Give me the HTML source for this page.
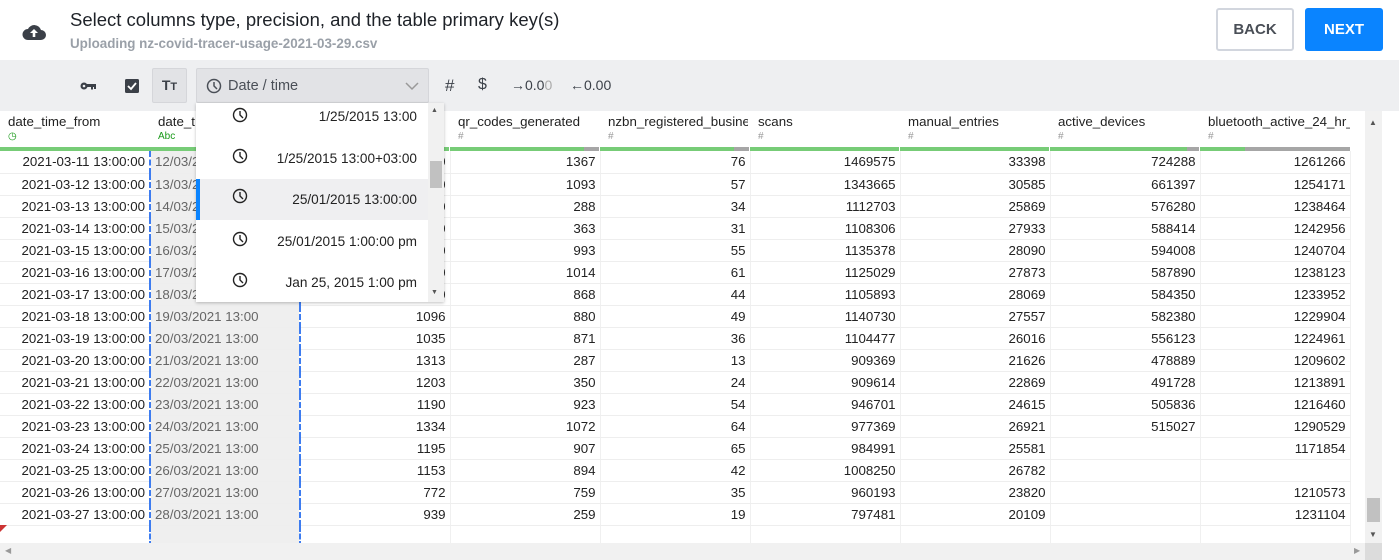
<!DOCTYPE html>
<html><head><meta charset="utf-8"><style>
*{box-sizing:border-box;margin:0;padding:0}
body{width:1399px;height:560px;overflow:hidden;background:#fff;font-family:"Liberation Sans",Arial,sans-serif;position:relative;color:#222}
.abs{position:absolute}
.title{left:70px;top:9px;font-size:18.5px;color:#1e2228}
.sub{left:70px;top:36px;font-size:13.4px;color:#9aa0a8;font-weight:bold}
.btn{top:8px;height:43px;width:78px;border-radius:3px;font-weight:bold;font-size:15px;display:flex;align-items:center;justify-content:center}
.toolbar{left:0;top:60px;width:1399px;height:51px;background:#eeeff1}
table{position:absolute;left:0;top:151px;border-collapse:collapse;table-layout:fixed;width:1350px}
td{width:150px;height:22px;border-right:1px solid #f0f0f0;border-bottom:1px solid #eee;text-align:right;padding-right:4px;font-size:13.3px;color:#222;white-space:nowrap;overflow:hidden}
td.c2{background:#efefef;color:#666;text-align:left;padding-left:4px;border-left:2px dashed #3d7cf0;border-right:2px dashed #3d7cf0}
.hd{top:114px;height:33px;font-size:13.3px;color:#222}
.hd span{display:block;font-size:10px;color:#999;margin-top:2px}
.bar{top:147px;height:4px}
.dd{left:196px;top:103px;width:248px;height:199px;background:#fff;box-shadow:0 1px 3px rgba(0,0,0,.25);overflow:hidden}
.it{position:absolute;left:0;width:232px;height:40px;font-size:13.6px;color:#222;text-align:right;padding-right:11px}
.it svg{position:absolute;left:36px;top:4px}
</style></head><body>
<svg class="abs" style="left:22px;top:23px" width="24" height="18" viewBox="0 0 24 18"><path d="M6 17h13a5 5 0 0 0 0-10 7 7 0 0 0-13-1A5.5 5.5 0 0 0 6 17z" fill="#3b4048"/><path d="M12 6l-4 4h2.7v4h2.6v-4H16z" fill="#fff"/></svg>
<div class="abs title">Select columns type, precision, and the table primary key(s)</div>
<div class="abs sub">Uploading nz-covid-tracer-usage-2021-03-29.csv</div>
<div class="abs btn" style="left:1216px;border:2px solid #d2d6de;color:#4a4f57">BACK</div>
<div class="abs btn" style="left:1305px;background:#0a84ff;color:#fff">NEXT</div>

<div class="abs toolbar"></div>
<svg class="abs" style="left:80px;top:81px" width="17" height="10" viewBox="0 0 17 10"><circle cx="4" cy="5" r="3.5" fill="#3b4048"/><circle cx="4" cy="5" r="1.3" fill="#eeeff1"/><rect x="6" y="3" width="10" height="3" fill="#3b4048"/><rect x="11" y="5" width="2" height="3.5" fill="#3b4048"/><rect x="14" y="5" width="2" height="3" fill="#3b4048"/></svg>
<svg class="abs" style="left:125px;top:79px" width="14" height="14" viewBox="0 0 14 14"><rect width="14" height="14" rx="1.5" fill="#3b4048"/><path d="M3 7l3 3 5-6" stroke="#fff" stroke-width="1.8" fill="none"/></svg>
<div class="abs" style="left:152px;top:68px;width:35px;height:35px;background:#e2e3e6;border:1px solid #d5d6da;border-radius:2px;font-weight:bold;font-size:14px;color:#3b4048;text-align:center;line-height:33px">T<span style="font-size:11px">T</span></div>
<div class="abs" style="left:196px;top:68px;width:233px;height:35px;background:#e2e3e6;border:1px solid #d5d6da;border-radius:2px;font-size:14.5px;color:#4a4f57;line-height:35px;padding-left:31px">Date / time</div>
<svg class="abs" style="left:206px;top:78px" width="16" height="16" viewBox="0 0 16 16"><circle cx="8" cy="8" r="6.5" fill="none" stroke="#4a4f57" stroke-width="1.5"/><path d="M8 4v4l3 3" fill="none" stroke="#4a4f57" stroke-width="1.5"/></svg>
<svg class="abs" style="left:405px;top:82px" width="14" height="9" viewBox="0 0 14 9"><path d="M1 1l6 6 6-6" fill="none" stroke="#999" stroke-width="1.5"/></svg>
<div class="abs" style="left:445px;top:76px;font-size:17px;color:#3b4048">#</div>
<div class="abs" style="left:478px;top:76px;font-size:16px;color:#3b4048">$</div>
<div class="abs" style="left:511px;top:77px;font-size:14px;color:#3b4048"><b>→</b>0.0<span style="color:#aaa">0</span></div>
<div class="abs" style="left:570px;top:77px;font-size:14px;color:#3b4048"><b>←</b>0.00</div>

<div class="abs hd" style="left:8px">date_time_from<span style="color:#1a9a1a">◷</span></div>
<div class="abs hd" style="left:158px">date_t<span style="color:#1a9a1a">Abc</span></div>
<div class="abs hd" style="left:458px">qr_codes_generated<span>#</span></div>
<div class="abs hd" style="left:608px;width:140px;overflow:hidden;white-space:nowrap">nzbn_registered_busine<span>#</span></div>
<div class="abs hd" style="left:758px">scans<span>#</span></div>
<div class="abs hd" style="left:908px">manual_entries<span>#</span></div>
<div class="abs hd" style="left:1058px">active_devices<span>#</span></div>
<div class="abs hd" style="left:1208px;width:142px;overflow:hidden;white-space:nowrap">bluetooth_active_24_hr_<span>#</span></div>

<div class="abs bar" style="left:0;width:1350px;background:#77cc77"></div>
<div class="abs bar" style="left:584px;width:15px;background:#a6a6a6"></div>
<div class="abs bar" style="left:734px;width:15px;background:#a6a6a6"></div>
<div class="abs bar" style="left:1187px;width:12px;background:#a6a6a6"></div>
<div class="abs bar" style="left:1245px;width:105px;background:#a6a6a6"></div>
<div class="abs bar" style="left:299px;width:1px;background:#fff"></div>
<div class="abs bar" style="left:449px;width:1px;background:#fff"></div>
<div class="abs bar" style="left:599px;width:1px;background:#fff"></div>
<div class="abs bar" style="left:749px;width:1px;background:#fff"></div>
<div class="abs bar" style="left:899px;width:1px;background:#fff"></div>
<div class="abs bar" style="left:1049px;width:1px;background:#fff"></div>
<div class="abs bar" style="left:1199px;width:1px;background:#fff"></div>

<table>
<tr><td>2021-03-11 13:00:00</td><td class="c2">12/03/2021 13:00</td><td>1200</td><td>1367</td><td>76</td><td>1469575</td><td>33398</td><td>724288</td><td>1261266</td></tr>
<tr><td>2021-03-12 13:00:00</td><td class="c2">13/03/2021 13:00</td><td>1100</td><td>1093</td><td>57</td><td>1343665</td><td>30585</td><td>661397</td><td>1254171</td></tr>
<tr><td>2021-03-13 13:00:00</td><td class="c2">14/03/2021 13:00</td><td>1100</td><td>288</td><td>34</td><td>1112703</td><td>25869</td><td>576280</td><td>1238464</td></tr>
<tr><td>2021-03-14 13:00:00</td><td class="c2">15/03/2021 13:00</td><td>1100</td><td>363</td><td>31</td><td>1108306</td><td>27933</td><td>588414</td><td>1242956</td></tr>
<tr><td>2021-03-15 13:00:00</td><td class="c2">16/03/2021 13:00</td><td>1100</td><td>993</td><td>55</td><td>1135378</td><td>28090</td><td>594008</td><td>1240704</td></tr>
<tr><td>2021-03-16 13:00:00</td><td class="c2">17/03/2021 13:00</td><td>1100</td><td>1014</td><td>61</td><td>1125029</td><td>27873</td><td>587890</td><td>1238123</td></tr>
<tr><td>2021-03-17 13:00:00</td><td class="c2">18/03/2021 13:00</td><td>1100</td><td>868</td><td>44</td><td>1105893</td><td>28069</td><td>584350</td><td>1233952</td></tr>
<tr><td>2021-03-18 13:00:00</td><td class="c2">19/03/2021 13:00</td><td>1096</td><td>880</td><td>49</td><td>1140730</td><td>27557</td><td>582380</td><td>1229904</td></tr>
<tr><td>2021-03-19 13:00:00</td><td class="c2">20/03/2021 13:00</td><td>1035</td><td>871</td><td>36</td><td>1104477</td><td>26016</td><td>556123</td><td>1224961</td></tr>
<tr><td>2021-03-20 13:00:00</td><td class="c2">21/03/2021 13:00</td><td>1313</td><td>287</td><td>13</td><td>909369</td><td>21626</td><td>478889</td><td>1209602</td></tr>
<tr><td>2021-03-21 13:00:00</td><td class="c2">22/03/2021 13:00</td><td>1203</td><td>350</td><td>24</td><td>909614</td><td>22869</td><td>491728</td><td>1213891</td></tr>
<tr><td>2021-03-22 13:00:00</td><td class="c2">23/03/2021 13:00</td><td>1190</td><td>923</td><td>54</td><td>946701</td><td>24615</td><td>505836</td><td>1216460</td></tr>
<tr><td>2021-03-23 13:00:00</td><td class="c2">24/03/2021 13:00</td><td>1334</td><td>1072</td><td>64</td><td>977369</td><td>26921</td><td>515027</td><td>1290529</td></tr>
<tr><td>2021-03-24 13:00:00</td><td class="c2">25/03/2021 13:00</td><td>1195</td><td>907</td><td>65</td><td>984991</td><td>25581</td><td></td><td>1171854</td></tr>
<tr><td>2021-03-25 13:00:00</td><td class="c2">26/03/2021 13:00</td><td>1153</td><td>894</td><td>42</td><td>1008250</td><td>26782</td><td></td><td></td></tr>
<tr><td>2021-03-26 13:00:00</td><td class="c2">27/03/2021 13:00</td><td>772</td><td>759</td><td>35</td><td>960193</td><td>23820</td><td></td><td>1210573</td></tr>
<tr><td>2021-03-27 13:00:00</td><td class="c2">28/03/2021 13:00</td><td>939</td><td>259</td><td>19</td><td>797481</td><td>20109</td><td></td><td>1231104</td></tr>
<tr><td style="border-bottom:none"></td><td class="c2" style="height:20px;border-bottom:none"></td><td style="border-bottom:none"></td><td style="border-bottom:none"></td><td style="border-bottom:none"></td><td style="border-bottom:none"></td><td style="border-bottom:none"></td><td style="border-bottom:none"></td><td style="border-bottom:none"></td></tr>
</table>
<div class="abs" style="left:0;top:525px;width:0;height:0;border-top:7px solid #c33;border-right:7px solid transparent"></div>

<div class="abs" style="left:1365px;top:111px;width:17px;height:432px;background:#f1f1f1"></div>
<div class="abs" style="left:1367px;top:498px;width:13px;height:24px;background:#c1c1c1"></div>
<div class="abs" style="left:1369px;top:118px;font-size:8px;color:#555">▲</div>
<div class="abs" style="left:1369px;top:530px;font-size:8px;color:#555">▼</div>
<div class="abs" style="left:0;top:543px;width:1365px;height:17px;background:#f1f1f1"></div>
<div class="abs" style="left:1365px;top:543px;width:17px;height:17px;background:#dcdcdc"></div>
<div class="abs" style="left:5px;top:546px;font-size:8px;color:#999">◀</div>
<div class="abs" style="left:1354px;top:546px;font-size:8px;color:#999">▶</div>

<div class="abs dd">
<div class="it" style="top:0;line-height:28px"><svg width="16" height="16" viewBox="0 0 16 16"><circle cx="8" cy="8" r="6.5" fill="none" stroke="#222" stroke-width="1.4"/><path d="M8 4v4l3 3" fill="none" stroke="#222" stroke-width="1.4"/></svg>1/25/2015 13:00</div>
<div class="it" style="top:41px;line-height:30px"><svg width="16" height="16" viewBox="0 0 16 16"><circle cx="8" cy="8" r="6.5" fill="none" stroke="#222" stroke-width="1.4"/><path d="M8 4v4l3 3" fill="none" stroke="#222" stroke-width="1.4"/></svg>1/25/2015 13:00+03:00</div>
<div class="it" style="top:76px;height:41px;line-height:42px;background:#efeff1;border-left:4px solid #0a84ff"><svg style="left:32px;top:9px" width="16" height="16" viewBox="0 0 16 16"><circle cx="8" cy="8" r="6.5" fill="none" stroke="#222" stroke-width="1.4"/><path d="M8 4v4l3 3" fill="none" stroke="#222" stroke-width="1.4"/></svg>25/01/2015 13:00:00</div>
<div class="it" style="top:124px;line-height:30px"><svg width="16" height="16" viewBox="0 0 16 16"><circle cx="8" cy="8" r="6.5" fill="none" stroke="#222" stroke-width="1.4"/><path d="M8 4v4l3 3" fill="none" stroke="#222" stroke-width="1.4"/></svg>25/01/2015 1:00:00 pm</div>
<div class="it" style="top:165px;line-height:30px"><svg width="16" height="16" viewBox="0 0 16 16"><circle cx="8" cy="8" r="6.5" fill="none" stroke="#222" stroke-width="1.4"/><path d="M8 4v4l3 3" fill="none" stroke="#222" stroke-width="1.4"/></svg>Jan 25, 2015 1:00 pm</div>
<div class="abs" style="left:232px;top:0;width:16px;height:199px;background:#f1f1f1"></div>
<div class="abs" style="left:234px;top:58px;width:12px;height:27px;background:#c1c1c1"></div>
<div class="abs" style="left:235px;top:4px;font-size:7px;color:#555">▲</div>
<div class="abs" style="left:235px;top:186px;font-size:7px;color:#555">▼</div>
</div>
</body></html>
